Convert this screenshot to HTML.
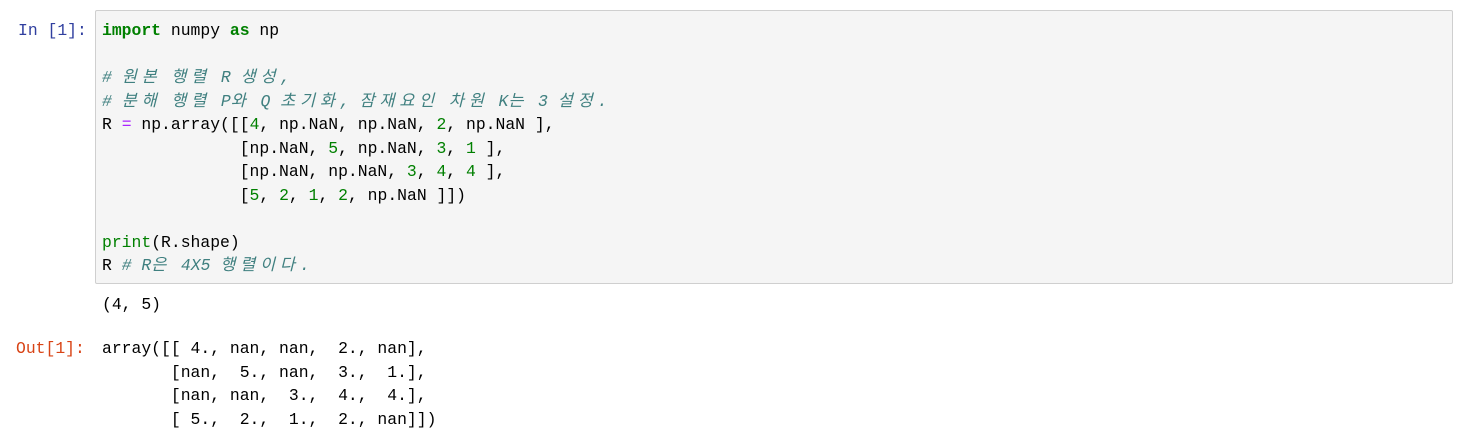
<!DOCTYPE html>
<html><head><meta charset="utf-8"><style>
body{margin:0;background:#fff;width:1459px;height:438px;overflow:hidden;position:relative;font-family:"Liberation Mono","Noto Sans CJK KR",monospace;font-size:16.4px;}
pre{margin:0;font-family:inherit;font-size:inherit;line-height:23.5px;white-space:pre;}
.p{position:absolute;color:#303F9F;}
.o{position:absolute;color:#D84315;}
.box{position:absolute;left:95px;top:10px;width:1356px;height:272px;background:#f5f5f5;border:1px solid #cfcfcf;border-radius:2px;}
.k{color:#008000;font-weight:bold}
.n{color:#008000}
.c{color:#408080;font-style:italic}
.op{color:#AA22FF}
.b{color:#008000}
.h{letter-spacing:4.8px}
</style></head><body>
<pre class="p" style="left:18px;top:19px">In [1]:</pre>
<div class="box"></div>
<pre style="position:absolute;left:102px;top:19px"><span class="k">import</span> numpy <span class="k">as</span> np

<span class="c"># <span class="h">원본</span> <span class="h">행렬</span> R <span class="h">생성</span>,</span>
<span class="c"># <span class="h">분해</span> <span class="h">행렬</span> P<span class="h">와</span> Q <span class="h">초기화</span>, <span class="h">잠재요인</span> <span class="h">차원</span> K<span class="h">는</span> 3 <span class="h">설정</span>.</span>
R <span class="op">=</span> np.array([[<span class="n">4</span>, np.NaN, np.NaN, <span class="n">2</span>, np.NaN ],
              [np.NaN, <span class="n">5</span>, np.NaN, <span class="n">3</span>, <span class="n">1</span> ],
              [np.NaN, np.NaN, <span class="n">3</span>, <span class="n">4</span>, <span class="n">4</span> ],
              [<span class="n">5</span>, <span class="n">2</span>, <span class="n">1</span>, <span class="n">2</span>, np.NaN ]])

<span class="b">print</span>(R.shape)
R <span class="c"># R<span class="h">은</span> 4X5 <span class="h">행렬이다</span>.</span></pre>
<pre style="position:absolute;left:102px;top:293px">(4, 5)</pre>
<pre class="o" style="left:16px;top:337px">Out[1]:</pre>
<pre style="position:absolute;left:102px;top:337px">array([[ 4., nan, nan,  2., nan],
       [nan,  5., nan,  3.,  1.],
       [nan, nan,  3.,  4.,  4.],
       [ 5.,  2.,  1.,  2., nan]])</pre>
</body></html>
